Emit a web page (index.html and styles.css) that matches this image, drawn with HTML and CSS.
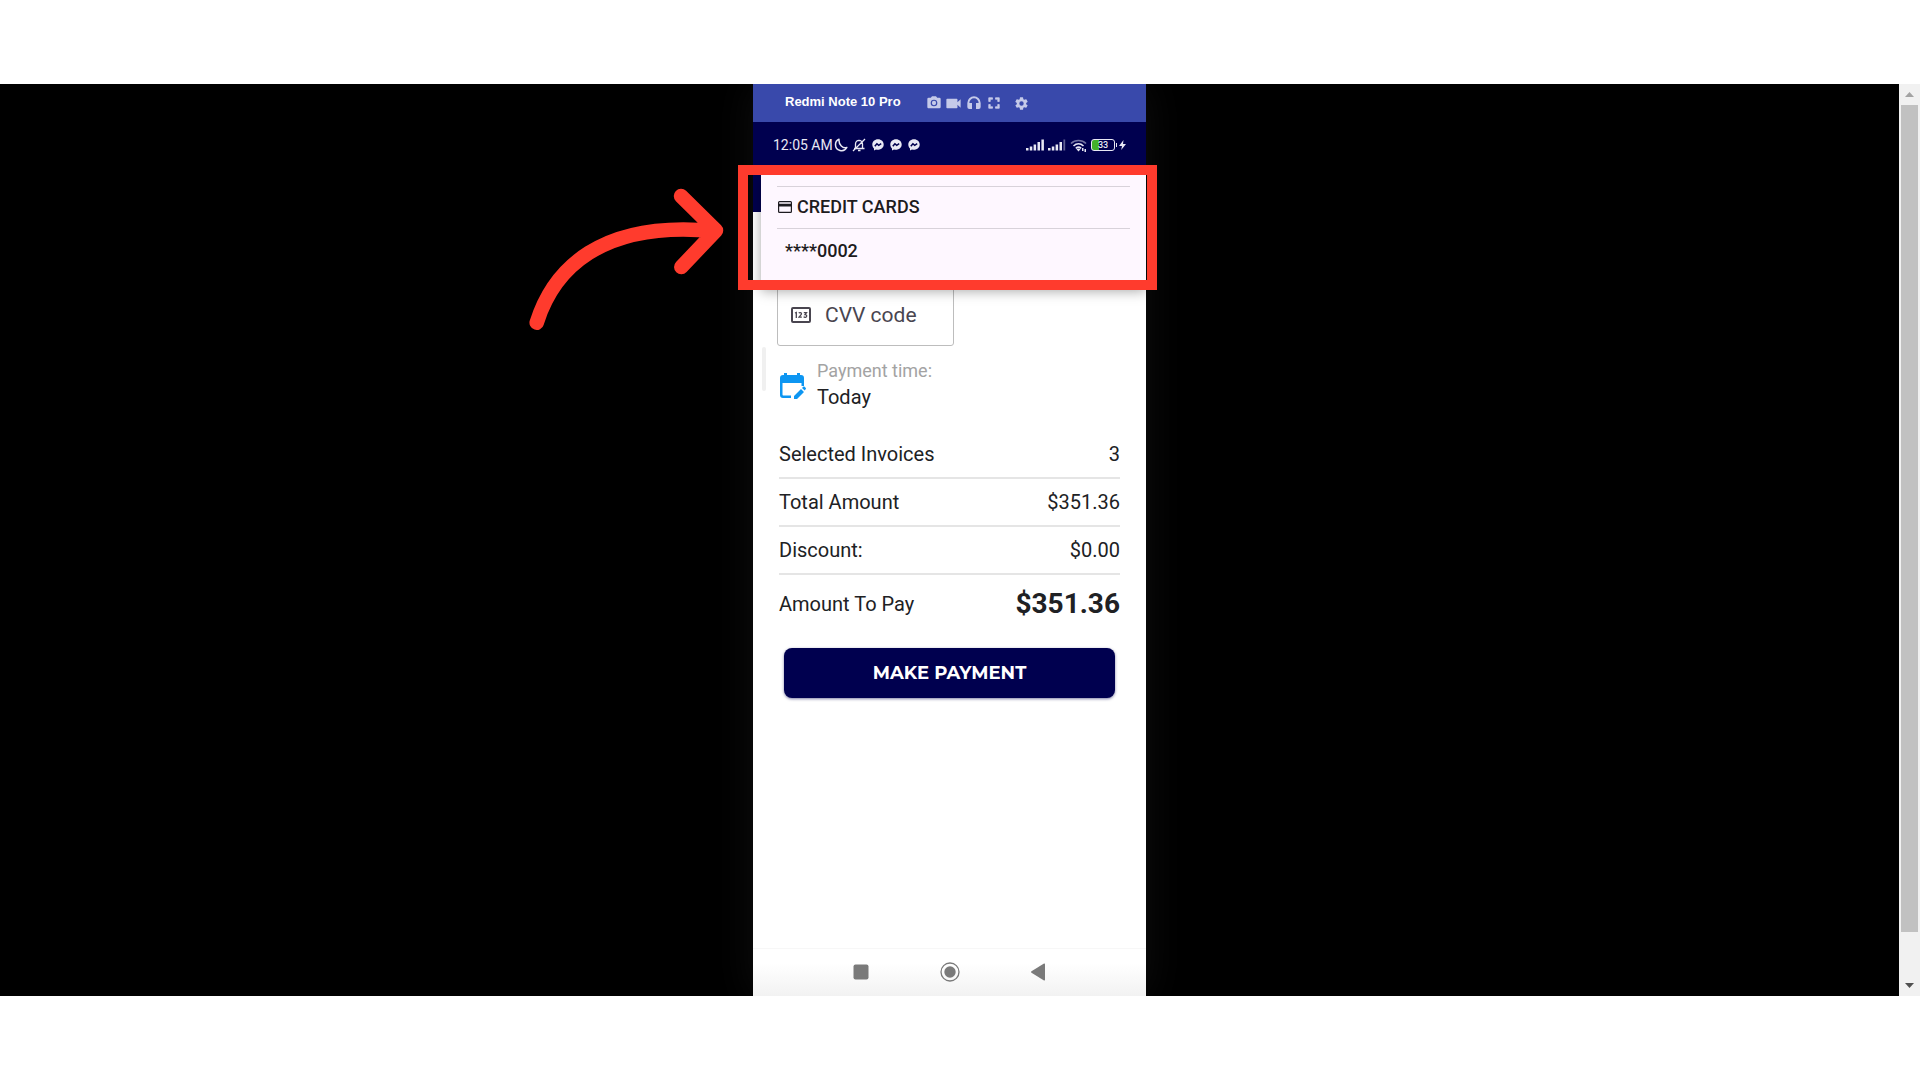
FILE: index.html
```
<!DOCTYPE html>
<html lang="en">

<head>
    <meta charset="UTF-8">
    <meta name="viewport" content="width=device-width, initial-scale=1.0">
    <title>Make payment</title>
    <link rel="stylesheet" href="styles.css">
</head>

<body>
    <div class="stage">
        <div class="desktop">
            <div class="phone">
                <header class="title-bar">
                    <h1>Redmi Note 10 Pro</h1>
                    <div class="tools">
                        <button type="button" aria-label="Screenshot">
                            <svg width="16" height="16" viewBox="0 0 24 24"><path fill-rule="evenodd" d="M9 2 7.200 4H4a2 2 0 0 0-2 2v12c0 1.100.9 2 2 2h16a2 2 0 0 0 2-2V6a2 2 0 0 0-2-2h-3.200L15 2zM12 17a5 5 0 1 1 0-10 5 5 0 0 1 0 10z"/><circle cx="12" cy="12" r="3.200"/></svg>
                        </button>
                        <button type="button" aria-label="Record">
                            <svg width="19" height="19" viewBox="0 0 24 24"><path d="M17 10.500V7a1 1 0 0 0-1-1H4a1 1 0 0 0-1 1v10a1 1 0 0 0 1 1h12a1 1 0 0 0 1-1v-3.500l4 4v-11z"/></svg>
                        </button>
                        <button type="button" aria-label="Audio">
                            <svg width="16" height="16" viewBox="0 0 24 24"><path d="M12 2a10 10 0 0 0-10 10v6a3 3 0 0 0 3 3h4v-9H5a7 7 0 0 1 14 0h-4v9h4a3 3 0 0 0 3-3v-6A10 10 0 0 0 12 2z"/></svg>
                        </button>
                        <button type="button" aria-label="Full screen">
                            <svg width="18" height="18" viewBox="0 0 24 24"><path d="M7 14H5v5h5v-2H7zM5 10h2V7h3V5H5zm12 7h-3v2h5v-5h-2zM14 5v2h3v3h2V5z" stroke-width="1" stroke="currentColor"/></svg>
                        </button>
                        <button type="button" class="settings" aria-label="Settings">
                            <svg width="15" height="15" viewBox="0 0 24 24"><path fill-rule="evenodd" d="M19.400 13a7.500 7.500 0 0 0 0-2l2.200-1.600c.2-.2.200-.4.100-.6l-2-3.500c-.1-.2-.4-.3-.6-.2l-2.500 1a7 7 0 0 0-1.700-1l-.4-2.600a.5.500 0 0 0-.5-.5h-4a.5.500 0 0 0-.5.500L9.100 5.100a7 7 0 0 0-1.700 1l-2.500-1c-.2-.1-.5 0-.6.200l-2 3.500c-.1.200-.1.400.1.600L4.600 11a7.500 7.500 0 0 0 0 2l-2.200 1.600c-.2.200-.2.400-.1.600l2 3.500c.1.200.4.300.6.200l2.500-1a7 7 0 0 0 1.700 1l.4 2.600c0 .3.200.5.500.5h4c.3 0 .5-.2.500-.5l.4-2.600a7 7 0 0 0 1.700-1l2.500 1c.2.100.5 0 .6-.2l2-3.500c.1-.2.100-.4-.1-.6zM12 15.500a3.500 3.500 0 1 1 0-7 3.500 3.500 0 0 1 0 7z"/></svg>
                        </button>
                    </div>
                </header>

                <div class="status-bar">
                    <div class="status-left">
                        <span>12:05 AM</span>
                        <div class="status-icons">
                            <svg width="14" height="14" viewBox="0 0 14 14" fill="none" stroke="currentColor" stroke-width="1.500" stroke-linejoin="round"><path d="M5 1.200C3 2 1.500 4 1.500 6.500a6 6 0 0 0 11.300 3C9 11 4.500 7 5 1.200z"/></svg>
                            <svg width="14" height="14" viewBox="0 0 14 14" fill="none" stroke="currentColor" stroke-width="1.300"><path d="M2 10.500h10.500M3.500 10V6A3.600 3.600 0 0 1 7 2.300c2 0 3.500 1.700 3.500 3.700v4.300M1 13 13 1M6 12.500h2.500"/></svg>
                            <svg class="chat" width="12" height="12" viewBox="0 0 12 12"><path d="M6 .3C2.700.300.3 2.600.3 5.600c0 1.700.7 3 1.700 4v2l2-1c3.800 1 7.700-1.200 7.700-5C11.700 2.600 9.300.300 6 .300z"/><path class="bolt" d="m2.800 7.200 2.100-2.500 1.800 1.600 2.500-1.700"/></svg>
                            <svg class="chat" width="12" height="12" viewBox="0 0 12 12"><path d="M6 .3C2.700.300.3 2.600.3 5.600c0 1.700.7 3 1.700 4v2l2-1c3.800 1 7.700-1.200 7.700-5C11.700 2.600 9.300.300 6 .300z"/><path class="bolt" d="m2.800 7.200 2.100-2.500 1.800 1.600 2.500-1.700"/></svg>
                            <svg class="chat" width="12" height="12" viewBox="0 0 12 12"><path d="M6 .3C2.700.300.3 2.600.3 5.600c0 1.700.7 3 1.700 4v2l2-1c3.800 1 7.700-1.200 7.700-5C11.700 2.600 9.300.300 6 .300z"/><path class="bolt" d="m2.800 7.200 2.100-2.500 1.800 1.600 2.500-1.700"/></svg>
                        </div>
                    </div>
                    <div class="status-right">
                        <svg width="18" height="12" viewBox="0 0 18 12"><path d="M0 9h2.500v2.500H0zM3.800 7.500h2.500v4H3.800zM7.600 5.500h2.500v6H7.600zM11.500 3H14v8.500h-2.500zM15.400 0.500h2.500v11h-2.500z"/></svg>
                        <svg width="18" height="12" viewBox="0 0 18 12"><path d="M0 9h2.500v2.500H0zM3.800 7.500h2.500v4H3.800zM7.600 5.500h2.500v6H7.600zM11.500 3H14v8.500h-2.500z"/><path opacity=".4" d="M15.400 0.500h1.800v11h-1.800z"/></svg>
                        <svg width="17" height="13" viewBox="0 0 17 13" fill="none" stroke="currentColor" stroke-width="1.600"><path opacity=".5" d="M1 4.500c4-4 11-4 15 0"/><path d="M3.500 7c3-2.800 7-2.800 10 0M5.800 9.300c1.700-1.500 3.700-1.500 5.400 0"/><path fill="currentColor" stroke="none" d="m6.500 10.200 2 2.300 2-2.300c-1-1-3-1-4 0zM12 9h1.500v3H12zM14.500 10H16v3h-1.500z"/></svg>
                        <span class="battery">33</span>
                        <svg width="7" height="12" viewBox="0 0 7 12"><path d="M4.500 1 0 7h3l-.8 4L7 5H4z"/></svg>
                    </div>
                </div>

                <div class="app-header"></div>

                <main class="payment">
                    <label class="cvv">
                        <svg width="20" height="16" viewBox="0 0 20 16" fill="none" stroke="currentColor"><rect x="1" y="1" width="18" height="14" rx="1" stroke-width="2"/><path stroke-width="1.300" d="m4 6 1.300-.6V11M7.800 6.200c.6-1 2.700-.8 2.700.5 0 1-1.500 2-2.500 3.500h2.800M12.800 5.700h2.700L14 7.700c1 0 1.800.500 1.700 1.400 0 1.400-2.200 1.700-3 .6"/></svg>
                        <input type="text" placeholder="CVV code" aria-label="CVV code">
                    </label>

                    <div class="schedule">
                        <svg width="27" height="28" viewBox="0 0 27 28"><path fill-rule="evenodd" d="M5 1h3v2h10V1h3v2h1a3 3 0 0 1 3 3v8h-2.500v-3H3.500v11.500c0 .6.400 1 1 1H12V26H4a3 3 0 0 1-3-3V6a3 3 0 0 1 3-3h1z"/><path d="m15 24 7-7 3 3-7 7h-3zM23 16l1.200-1.200c.4-.4 1-.4 1.400 0l1 1c.5.500.5 1 0 1.500L25.700 18.500z"/></svg>
                        <div>
                            <p class="schedule-label">Payment time:</p>
                            <p class="schedule-value">Today</p>
                        </div>
                    </div>

                    <dl class="summary">
                        <div>
                            <dt>Selected Invoices</dt>
                            <dd>3</dd>
                        </div>
                        <div>
                            <dt>Total Amount</dt>
                            <dd>$351.36</dd>
                        </div>
                        <div>
                            <dt>Discount:</dt>
                            <dd>$0.00</dd>
                        </div>
                        <div class="total">
                            <dt>Amount To Pay</dt>
                            <dd>$351.36</dd>
                        </div>
                    </dl>

                    <button type="button" class="pay">MAKE PAYMENT</button>
                </main>

                <nav class="nav-bar">
                    <button type="button" aria-label="Recent apps">
                        <svg width="20" height="20" viewBox="0 0 20 20"><rect x="2.500" y="2.500" width="15" height="15" rx="2"/></svg>
                    </button>
                    <button type="button" aria-label="Home">
                        <svg width="20" height="20" viewBox="0 0 20 20"><circle cx="10" cy="10" r="9" fill="none" stroke="currentColor" stroke-width="1.300"/><circle cx="10" cy="10" r="5.700"/></svg>
                    </button>
                    <button type="button" aria-label="Back">
                        <svg width="20" height="20" viewBox="0 0 20 20"><path d="M3.500 9.200 16 1.600c.6-.3 1 0 1 .600v15.600c0 .6-.4.900-1 .600L3.500 10.800c-.6-.4-.6-1.200 0-1.600z"/></svg>
                    </button>
                </nav>

                <!-- card picker -->
                <div class="card-menu">
                    <h2>
                        <svg width="14" height="12" viewBox="0 0 14 12"><path fill-rule="evenodd" d="M1.500 0h11A1.500 1.500 0 0 1 14 1.500v9a1.500 1.500 0 0 1-1.500 1.500h-11A1.500 1.500 0 0 1 0 10.500v-9A1.500 1.500 0 0 1 1.500 0zM1.200 1.200v1.500h11.600V1.200zM1.200 5.500v5.300h11.600V5.500z"/></svg>
                        CREDIT CARDS
                    </h2>
                    <button type="button">****0002</button>
                </div>
                <div class="side-handle"></div>

                <!-- callout -->
                <div class="highlight"></div>
                <svg class="arrow" width="210" height="160" viewBox="0 0 210 160"><path d="M17.700 142.700C34.300 90 81 40 195 51M162 16l35 34.500L162.300 87"/></svg>
            </div>
        </div>

        <div class="scrollbar">
            <button type="button" aria-label="Scroll up"><svg width="9" height="5" viewBox="0 0 9 5"><path d="M4.500 0 9 5H0z"/></svg></button>
            <div class="track">
                <div class="thumb"></div>
            </div>
            <button type="button" class="down" aria-label="Scroll down"><svg width="9" height="5" viewBox="0 0 9 5"><path d="M0 0h9L4.500 5z"/></svg></button>
        </div>
    </div>
</body>

</html>
```
FILE: styles.css
```
* {
    margin: 0;
    padding: 0;
    box-sizing: border-box;
}

body {
    min-height: 100vh;
    padding: 84px 0;
    display: flex;
    background-color: #ffffff;
    font-family: Roboto, sans-serif;
    color: #202124;
}

button {
    border: none;
    background: none;
    color: inherit;
    font-family: inherit;
    cursor: pointer;
}

svg {
    display: block;
    flex: none;
    fill: currentColor;
}

svg[fill="none"] {
    fill: none;
}

.stage {
    flex: 1;
    display: flex;
    background-color: #000000;
    overflow: hidden;
}

.desktop {
    flex: 1;
    display: flex;
    justify-content: center;
}

.phone {
    position: relative;
    width: 100%;
    max-width: 393px;
    display: flex;
    flex-direction: column;
    background-color: #ffffff;
    box-shadow: 0 0 40px rgba(255, 255, 255, 0.06);
}

/* Window title */
.title-bar {
    height: 38px;
    padding: 0 32px;
    display: flex;
    align-items: center;
    gap: 24px;
    background-color: #3949ab;
    color: #ffffff;
}

.title-bar h1 {
    padding-bottom: 3px;
    font-family: "Liberation Sans", Arial, sans-serif;
    font-size: 13px;
    line-height: 16px;
}

.tools {
    display: flex;
    align-items: center;
    gap: 2px;
    color: #c5cae9;
}

.tools button {
    width: 18px;
    height: 20px;
    display: flex;
    align-items: center;
    justify-content: center;
}

.tools .settings {
    margin-left: 8px;
}

/* Phone status bar */
.status-bar {
    height: 46px;
    padding: 0 20px;
    display: flex;
    justify-content: space-between;
    align-items: center;
    background-color: #00004f;
    color: #e8e8f4;
}

.status-left,
.status-icons,
.status-right {
    display: flex;
    align-items: center;
    gap: 4px;
}

.status-left {
    gap: 1px;
    font-size: 14px;
}

.chat {
    margin-left: 2px;
}

.bolt {
    fill: none;
    stroke: #00004f;
    stroke-width: 1.5;
}

.battery {
    position: relative;
    width: 24px;
    height: 12px;
    border: 1px solid #e8e8f4;
    border-radius: 3px;
    background: linear-gradient(90deg, #43b02a 33%, transparent 33%);
    font-size: 9px;
    font-weight: 500;
    line-height: 10px;
    text-align: center;
}

.battery::after {
    content: "";
    position: absolute;
    top: 3px;
    right: -3px;
    width: 1px;
    height: 4px;
    background-color: #e8e8f4;
}

.app-header {
    height: 44px;
    background-color: #00004f;
}

/* Payment form */
.payment {
    flex: 1;
    padding: 72px 24px 0;
    display: flex;
    flex-direction: column;
}

.cvv {
    width: 177px;
    height: 62px;
    padding: 0 13px;
    display: flex;
    align-items: center;
    gap: 14px;
    border: 1px solid #bdbdbd;
    border-radius: 3px;
    color: #49454f;
}

.cvv input {
    width: 100%;
    border: none;
    outline: none;
    background: none;
    font-family: inherit;
    font-size: 21px;
    color: #202124;
}

.cvv input::placeholder {
    color: #49454f;
    opacity: 1;
}

.schedule {
    padding: 12px 2px 0;
    display: flex;
    align-items: center;
    gap: 11px;
}

.schedule svg {
    color: #0d96f2;
    margin-top: 4px;
}

.schedule-label {
    font-size: 18px;
    line-height: 26px;
    color: #a3a3a3;
}

.schedule-value {
    font-size: 20px;
    line-height: 26px;
}

.summary {
    margin: 21px 2px 0;
}

.summary div {
    height: 48px;
    display: flex;
    justify-content: space-between;
    align-items: center;
    border-bottom: 2px solid #e5e5e5;
    font-size: 20px;
}

.summary .total {
    height: 57px;
    border-bottom: none;
}

.total dd {
    font-size: 28px;
    font-weight: 700;
}

.pay {
    height: 50px;
    margin: 16px 7px 0;
    border-radius: 8px;
    background-color: #00004f;
    box-shadow: 0 1px 3px rgba(0, 0, 79, 0.5);
    color: #ffffff;
    font-family: Montserrat, Inter, sans-serif;
    font-size: 18px;
    font-weight: 700;
}

/* Android navigation */
.nav-bar {
    height: 48px;
    padding: 0 98px 2px;
    display: flex;
    justify-content: space-between;
    align-items: center;
    background: linear-gradient(#ffffff 30%, #f2f2f2);
    color: #7a7a7a;
    border-top: 1px solid #f7f7f7;
}

/* Card picker */
.card-menu {
    position: absolute;
    top: 91px;
    left: 8px;
    right: 0;
    height: 112px;
    padding: 11px 16px 0;
    background-color: #fef7ff;
    box-shadow: 0 4px 12px rgba(0, 0, 0, 0.35);
    clip-path: inset(0 0 -24px -8px);
    color: #1d1b20;
}

.card-menu h2 {
    height: 43px;
    padding: 0 1px 2px;
    display: flex;
    align-items: center;
    gap: 5px;
    border-top: 1px solid #d8d2da;
    border-bottom: 1px solid #d8d2da;
    font-size: 18px;
    font-weight: 500;
}

.card-menu button {
    width: 100%;
    height: 42px;
    padding: 0 8px;
    text-align: left;
    font-size: 18px;
    font-weight: 500;
}

.side-handle {
    position: absolute;
    top: 263px;
    left: 9px;
    width: 4px;
    height: 44px;
    border-radius: 2px;
    background-color: #f0f0f0;
}

/* Callout */
.highlight {
    position: absolute;
    top: 81px;
    left: -15px;
    right: -11px;
    height: 125px;
    border: 10px solid #ff3b2d;
    pointer-events: none;
}

.arrow {
    position: absolute;
    top: 96px;
    left: -234px;
    fill: none;
    stroke: #ff3b2d;
    stroke-width: 14.5;
    stroke-linecap: round;
    stroke-linejoin: round;
}

/* Scrollbar */
.scrollbar {
    width: 21px;
    display: flex;
    flex-direction: column;
    background-color: #f1f1f1;
    color: #a3a3a3;
}

.scrollbar button {
    height: 21px;
    display: flex;
    align-items: center;
    justify-content: center;
}

.scrollbar .down {
    color: #505050;
}

.track {
    flex: 1;
    padding: 0 2px;
}

.thumb {
    height: 95%;
    background-color: #c1c1c1;
}
```
